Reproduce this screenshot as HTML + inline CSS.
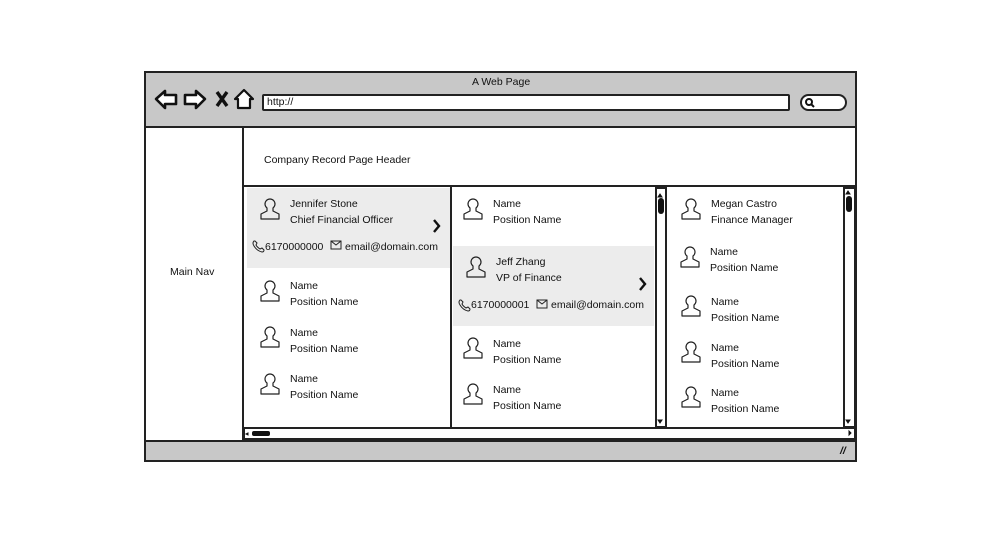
<!DOCTYPE html><html><head><style>
body{margin:0;width:1000px;height:535px;background:#fff;font-family:"Liberation Sans",sans-serif;font-size:10.5px;color:#111;position:relative;overflow:hidden}
.a{position:absolute}
.b{border:2px solid #222;box-sizing:border-box}
.t{position:absolute;white-space:nowrap}
svg{position:absolute}
</style></head><body>
<div class="a b" style="left:144px;top:71px;width:713px;height:391px;background:#fff"></div>
<div class="a" style="left:146px;top:73px;width:709px;height:53px;background:#c8c8c8;border-bottom:2px solid #222"></div>
<div class="t" style="left:472px;top:76px">A Web Page</div>
<svg style="left:154px;top:88px" width="100" height="24" viewBox="0 0 100 24">
<path d="M2 11 L11 3 L11 7 L22 7 L22 16 L11 16 L11 20 Z" fill="#fff" stroke="#111" stroke-width="2.6" stroke-linejoin="round"/>
<path d="M51 11 L42 3 L42 7 L31 7 L31 16 L42 16 L42 20 Z" fill="#fff" stroke="#111" stroke-width="2.6" stroke-linejoin="round"/>
<path d="M63 4 L73 18 M73 4 L63 18" stroke="#111" stroke-width="3.4"/>
<path d="M90 2 L99 11 L96 11 L96 20 L84 20 L84 11 L81 11 Z" fill="#fff" stroke="#111" stroke-width="2.2" stroke-linejoin="round"/>
</svg>
<div class="a b" style="left:262px;top:94px;width:528px;height:17px;background:#fff;border-radius:2px"></div>
<div class="t" style="left:267px;top:96px">http://</div>
<div class="a b" style="left:800px;top:94px;width:47px;height:17px;background:#fff;border-radius:9px"></div>
<svg style="left:804px;top:97px" width="12" height="12"><circle cx="5" cy="5" r="3" fill="none" stroke="#111" stroke-width="2"/><path d="M7 7 L10 10" stroke="#111" stroke-width="2"/></svg>
<div class="a" style="left:242px;top:127px;width:2px;height:313px;background:#222"></div>
<div class="t" style="left:170px;top:266px">Main Nav</div>
<div class="t" style="left:264px;top:154px">Company Record Page Header</div>
<div class="a" style="left:244px;top:185px;width:612px;height:2px;background:#222"></div>
<div class="a" style="left:146px;top:440px;width:709px;height:18px;background:#c8c8c8;border-top:2px solid #222"></div>
<div class="t" style="left:840px;top:445px;font-weight:bold;font-style:italic">//</div>
<div class="a" style="left:247px;top:188px;width:203px;height:80px;background:#ececec"></div>
<div class="a" style="left:453px;top:246px;width:201px;height:80px;background:#ececec"></div>
<div class="a" style="left:450px;top:187px;width:2px;height:241px;background:#222"></div>
<div class="a b" style="left:655px;top:187px;width:12px;height:241px;background:#fff"></div>
<div class="a" style="left:658px;top:198px;width:6px;height:16px;background:#111;border-radius:3px"></div>
<div class="a b" style="left:843px;top:187px;width:13px;height:241px;background:#fff"></div>
<div class="a" style="left:846px;top:196px;width:6px;height:16px;background:#111;border-radius:3px"></div>
<div class="a b" style="left:243px;top:427px;width:613px;height:13px;background:#fff"></div>
<div class="a" style="left:252px;top:431px;width:18px;height:5px;background:#111;border-radius:2px"></div>
<svg style="left:0;top:0" width="1000" height="535">
<defs><g id="p"><path d="M6 3 a5 5 0 1 1 6 0 l0 3 l6 3 l0 5 l-18 0 l0 -5 l6 -3 z" fill="none" stroke="#222" stroke-width="1.2" stroke-linejoin="round"/></g></defs>
<use href="#p" x="261" y="205"/><use href="#p" x="261" y="287"/><use href="#p" x="261" y="333"/><use href="#p" x="261" y="380"/>
<use href="#p" x="464" y="205"/><use href="#p" x="467" y="263"/><use href="#p" x="464" y="344"/><use href="#p" x="464" y="390"/>
<use href="#p" x="682" y="205"/><use href="#p" x="681" y="253"/><use href="#p" x="682" y="302"/><use href="#p" x="682" y="348"/><use href="#p" x="682" y="393"/>
<path d="M434 220 l5 6 l-5 6 M640 278 l5 6 l-5 6" fill="none" stroke="#111" stroke-width="2.4"/>
<path d="M331 241 h10 v8 h-10 z M331 241 l5 4 l5 -4 M537 300 h10 v8 h-10 z M537 300 l5 4 l5 -4" fill="none" stroke="#222" stroke-width="1"/>
<path d="M254 241 q-2 2 0 5 q3 5 8 6 q2 0 2 -2 l-2 -2 l-2 1 q-3 -2 -4 -4 l1 -2 l-2 -2 z M460 300 q-2 2 0 5 q3 5 8 6 q2 0 2 -2 l-2 -2 l-2 1 q-3 -2 -4 -4 l1 -2 l-2 -2 z" fill="none" stroke="#222" stroke-width="1"/>
<path d="M658 197 l2 -3 l2 3 z M658 420 l2 3 l2 -3 z M846 194 l2 -3 l2 3 z M846 420 l2 3 l2 -3 z M248 433 l-2 1 l2 1 z M849 431 l2 2 l-2 2 z" fill="#111" stroke="#111"/>
</svg>
<div class="t" style="left:290px;top:198px">Jennifer Stone</div>
<div class="t" style="left:290px;top:214px">Chief Financial Officer</div>
<div class="t" style="left:265px;top:241px">6170000000</div>
<div class="t" style="left:345px;top:241px">email@domain.com</div>
<div class="t" style="left:290px;top:280px">Name</div><div class="t" style="left:290px;top:296px">Position Name</div>
<div class="t" style="left:290px;top:327px">Name</div><div class="t" style="left:290px;top:343px">Position Name</div>
<div class="t" style="left:290px;top:373px">Name</div><div class="t" style="left:290px;top:389px">Position Name</div>
<div class="t" style="left:493px;top:198px">Name</div><div class="t" style="left:493px;top:214px">Position Name</div>
<div class="t" style="left:496px;top:256px">Jeff Zhang</div><div class="t" style="left:496px;top:272px">VP of Finance</div>
<div class="t" style="left:471px;top:299px">6170000001</div>
<div class="t" style="left:551px;top:299px">email@domain.com</div>
<div class="t" style="left:493px;top:338px">Name</div><div class="t" style="left:493px;top:354px">Position Name</div>
<div class="t" style="left:493px;top:384px">Name</div><div class="t" style="left:493px;top:400px">Position Name</div>
<div class="t" style="left:711px;top:198px">Megan Castro</div><div class="t" style="left:711px;top:214px">Finance Manager</div>
<div class="t" style="left:710px;top:246px">Name</div><div class="t" style="left:710px;top:262px">Position Name</div>
<div class="t" style="left:711px;top:296px">Name</div><div class="t" style="left:711px;top:312px">Position Name</div>
<div class="t" style="left:711px;top:342px">Name</div><div class="t" style="left:711px;top:358px">Position Name</div>
<div class="t" style="left:711px;top:387px">Name</div><div class="t" style="left:711px;top:403px">Position Name</div>
</body></html>
